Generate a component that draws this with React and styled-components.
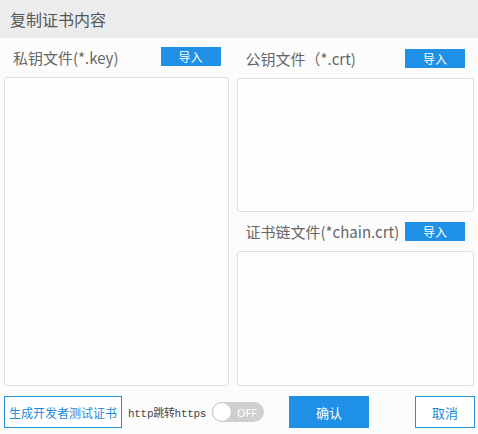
import React, { useState } from 'react';
import styled, { createGlobalStyle } from 'styled-components';

const GlobalStyle = createGlobalStyle`
  body {
    margin: 0;
    background: #fcfcfc;
    font-family: "Noto Sans CJK SC", "Noto Sans", sans-serif;
  }
`;

const Dialog = styled.div`
  width: 478px;
  height: 434px;
  display: flex;
  flex-direction: column;
  background: #fcfcfc;
  box-sizing: border-box;
`;

const Header = styled.div`
  height: 38px;
  flex-shrink: 0;
  background: #ececec;
  display: flex;
  align-items: center;
  padding-left: 10px;
  font-size: 16px;
  color: #555;
`;

const Body = styled.div`
  display: flex;
  gap: 8px;
  padding: 0 4px;
  height: 348px;
`;

const Column = styled.div`
  width: ${(p) => p.width}px;
  display: flex;
  flex-direction: column;
`;

const LabelRow = styled.div`
  height: ${(p) => p.h || 39}px;
  flex-shrink: 0;
  display: flex;
  align-items: center;
  justify-content: space-between;
  padding: 0 ${(p) => p.pr || 8}px 0 9px;
`;

const Label = styled.span`
  font-size: 15px;
  color: #666;
  white-space: nowrap;
`;

const ImportButton = styled.button`
  width: 60px;
  height: 19px;
  flex-shrink: 0;
  border: 0;
  padding: 0;
  background: #1e90e6;
  color: #fff;
  font-family: inherit;
  font-size: 12px;
  line-height: 19px;
  margin-top: ${(p) => p.mt || 0}px;
`;

const Area = styled.textarea`
  flex: ${(p) => (p.h ? 'none' : 1)};
  height: ${(p) => (p.h ? `${p.h}px` : 'auto')};
  box-sizing: border-box;
  resize: none;
  border: 1px solid #dedede;
  border-radius: 3px;
  background: #fefefe;
  outline: none;
`;

const Footer = styled.div`
  display: flex;
  align-items: center;
  padding: 10px 3px 0 4px;
  height: 32px;
`;

const OutlineButton = styled.button`
  height: 32px;
  width: ${(p) => p.w}px;
  flex-shrink: 0;
  box-sizing: border-box;
  border: 1px solid #2a8ed6;
  background: #fff;
  color: #1e88d8;
  font-family: inherit;
  font-size: ${(p) => p.fs || 13}px;
  white-space: nowrap;
  padding: 0;
  margin-left: ${(p) => p.ml || 0}px;
`;

const PrimaryButton = styled.button`
  height: 32px;
  width: 80px;
  flex-shrink: 0;
  border: 0;
  background: #1e90e6;
  color: #fff;
  font-family: inherit;
  font-size: 13px;
  padding: 0;
  margin-left: 25px;
`;

const RedirectText = styled.span`
  margin-left: 6px;
  width: 78px;
  flex-shrink: 0;
  white-space: nowrap;
  font-family: "Liberation Mono", "Noto Sans CJK SC", monospace;
  font-size: 11px;
  color: #444;
  letter-spacing: -0.3px;
`;

const Toggle = styled.div`
  margin-left: 6px;
  width: 52px;
  height: 20px;
  flex-shrink: 0;
  border-radius: 10px;
  background: #cfcfcf;
  display: flex;
  align-items: center;
  box-sizing: border-box;
`;

const Knob = styled.span`
  width: 20px;
  height: 20px;
  box-sizing: border-box;
  border-radius: 50%;
  background: #fff;
  border: 1px solid #c4c4c4;
`;

const ToggleText = styled.span`
  margin-left: 5px;
  font-family: "Noto Sans", sans-serif;
  font-size: 11px;
  color: #fff;
`;

export default function App() {
  const [on] = useState(false);
  return (
    <>
      <GlobalStyle />
      <Dialog>
        <Header>复制证书内容</Header>
        <Body>
          <Column width={225}>
            <LabelRow>
              <Label>私钥文件(*.key)</Label>
              <ImportButton mt={-2}>导入</ImportButton>
            </LabelRow>
            <Area />
          </Column>
          <Column width={238}>
            <LabelRow h={40} pr={9}>
              <Label>公钥文件（*.crt)</Label>
              <ImportButton>导入</ImportButton>
            </LabelRow>
            <Area h={134} />
            <LabelRow pr={9}>
              <Label>证书链文件(*chain.crt)</Label>
              <ImportButton>导入</ImportButton>
            </LabelRow>
            <Area />
          </Column>
        </Body>
        <Footer>
          <OutlineButton w={118} fs={12}>生成开发者测试证书</OutlineButton>
          <RedirectText>http跳转https</RedirectText>
          <Toggle>
            <Knob />
            <ToggleText>{on ? 'ON' : 'OFF'}</ToggleText>
          </Toggle>
          <PrimaryButton>确认</PrimaryButton>
          <OutlineButton w={60} ml={46}>取消</OutlineButton>
        </Footer>
      </Dialog>
    </>
  );
}
